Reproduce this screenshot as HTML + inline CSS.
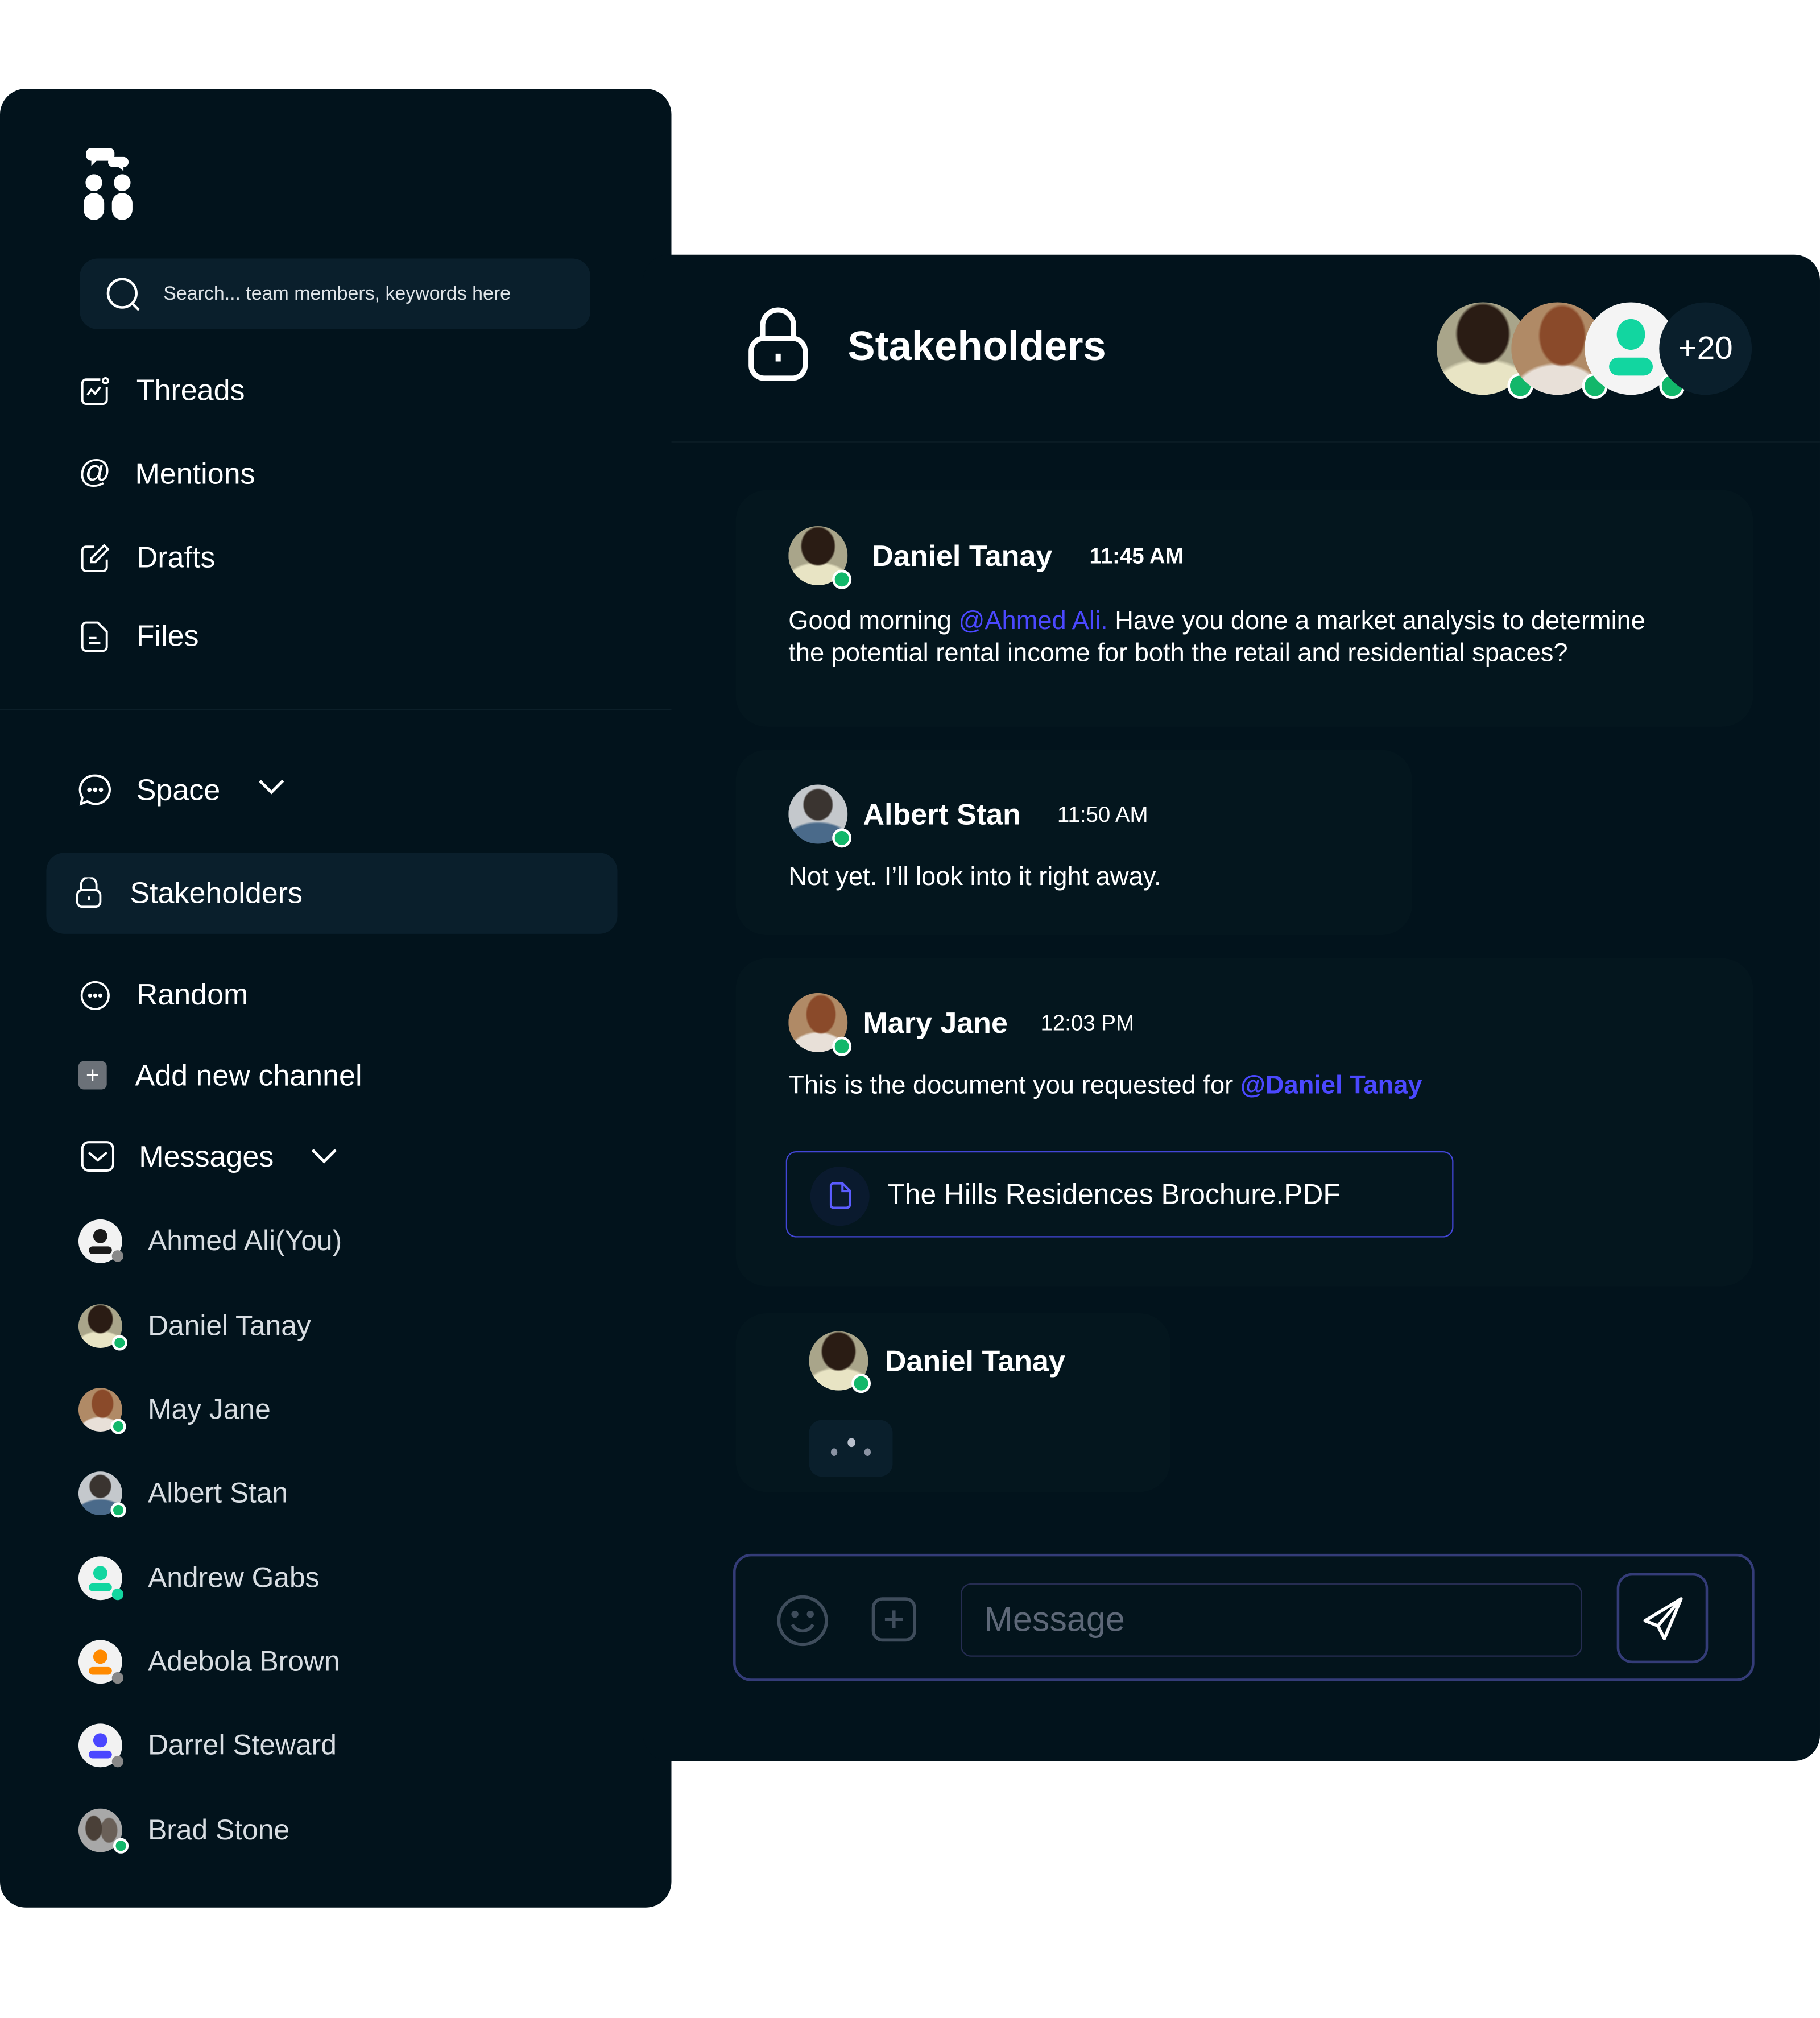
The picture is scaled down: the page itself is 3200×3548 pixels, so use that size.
<!DOCTYPE html>
<html><head><meta charset="utf-8">
<style>
html,body{margin:0;padding:0;background:#fff;}
body{width:3200px;height:3547px;overflow:hidden;position:relative;font-family:"Liberation Sans",sans-serif;}
#s{position:absolute;left:0;top:0;width:1415px;height:1569px;transform:scale(2.26148);transform-origin:0 0;}
.a{position:absolute;}
.side{left:0;top:69px;width:522px;height:1414px;background:#02131c;border-radius:20px;}
.main{left:500px;top:198px;width:915px;height:1171px;background:#02131c;border-radius:20px;}
.t{position:absolute;color:#fff;white-space:nowrap;line-height:1;}
.nav{font-size:23px;}
.ic{position:absolute;}
.card{position:absolute;background:#04161e;border-radius:24px;}
.av{position:absolute;border-radius:50%;overflow:hidden;}
.dot{position:absolute;border-radius:50%;background:#12b76a;border:2px solid #fff;}
.gdot{position:absolute;border-radius:50%;background:#888;}
.cn{font-size:22px;color:#d8dde2;}
.dt{background:radial-gradient(ellipse 30% 34% at 50% 34%,#2a1c14 0 90%,transparent 100%),radial-gradient(ellipse 60% 40% at 50% 100%,#e8e4c4 0 90%,transparent 100%),#a9a58a;}
.mj{background:radial-gradient(ellipse 26% 34% at 55% 36%,#8a4a2a 0 90%,transparent 100%),radial-gradient(ellipse 50% 35% at 50% 100%,#e8e0d8 0 90%,transparent 100%),#b08a66;}
.as{background:radial-gradient(ellipse 26% 28% at 50% 34%,#3a3430 0 90%,transparent 100%),radial-gradient(ellipse 60% 38% at 50% 100%,#4a6a8a 0 90%,transparent 100%),#c4c8cc;}
.bs{background:radial-gradient(ellipse 20% 30% at 35% 45%,#4a4038 0 90%,transparent 100%),radial-gradient(ellipse 20% 30% at 70% 50%,#6a6058 0 90%,transparent 100%),#a8a8a8;}
</style></head><body>
<div id="s">
<div class="a side"></div>
<div class="a main"></div>
<div class="a" style="left:522px;top:343px;width:893px;height:1px;background:#0a1c25"></div>
<div class="a" style="left:0;top:551px;width:522px;height:1px;background:#0c1f29"></div>

<svg class="ic" style="left:62px;top:113px" width="48" height="60" viewBox="0 0 48 60">
<rect x="5" y="2" width="22" height="10" rx="4" fill="#fff"/><path d="M9 11l0 5 5-5z" fill="#fff"/>
<rect x="22" y="9" width="16" height="8" rx="4" fill="#fff"/><path d="M29 16l5 4 0-4z" fill="#fff"/>
<circle cx="11" cy="29" r="6.5" fill="#fff"/><circle cx="33" cy="29" r="6.5" fill="#fff"/>
<rect x="3" y="37" width="16" height="21" rx="8" fill="#fff"/><rect x="25" y="37" width="16" height="21" rx="8" fill="#fff"/>
</svg>

<div class="a" style="left:62px;top:201px;width:397px;height:55px;background:#0a1f2c;border-radius:14px"></div>
<svg class="ic" style="left:82px;top:214px" width="30" height="30" viewBox="0 0 30 30" fill="none" stroke="#fff" stroke-width="2"><circle cx="13" cy="14" r="11"/><path d="M21 22l5 5"/></svg>
<div class="t" style="left:127px;top:221px;font-size:15px;color:#dfe4e8">Search... team members, keywords here</div>

<svg class="ic" style="left:62px;top:292px" width="24" height="24" viewBox="0 0 24 24" fill="none" stroke="#fff" stroke-width="1.7"><path d="M16 3H5a3 3 0 0 0-3 3v13a3 3 0 0 0 3 3h13a3 3 0 0 0 3-3V9"/><circle cx="20" cy="4" r="2"/><path d="M6 15l3-4 3 3 4-5"/></svg>
<div class="t nav" style="left:106px;top:292px">Threads</div>
<div class="t" style="left:61px;top:355px;font-size:25px">@</div>
<div class="t nav" style="left:105px;top:357px">Mentions</div>
<svg class="ic" style="left:62px;top:422px" width="24" height="24" viewBox="0 0 24 24" fill="none" stroke="#fff" stroke-width="1.7"><path d="M11 3H5a3 3 0 0 0-3 3v13a3 3 0 0 0 3 3h13a3 3 0 0 0 3-3v-6"/><path d="M19 2l3 3-10 10H9v-3z"/></svg>
<div class="t nav" style="left:106px;top:422px">Drafts</div>
<svg class="ic" style="left:63px;top:483px" width="22" height="24" viewBox="0 0 22 24" fill="none" stroke="#fff" stroke-width="1.7"><path d="M4 1h9l7 7v12a3 3 0 0 1-3 3H4a3 3 0 0 1-3-3V4a3 3 0 0 1 3-3z"/><path d="M6 13h6M6 17h9"/></svg>
<div class="t nav" style="left:106px;top:483px">Files</div>

<svg class="ic" style="left:61px;top:601px" width="26" height="26" viewBox="0 0 26 26" fill="none" stroke="#fff" stroke-width="1.8"><path d="M13 2a11 11 0 1 1-6 20l-5 2 1-5A11 11 0 0 1 13 2z"/><circle cx="8.5" cy="13" r=".8" fill="#fff"/><circle cx="13" cy="13" r=".8" fill="#fff"/><circle cx="17.5" cy="13" r=".8" fill="#fff"/></svg>
<div class="t nav" style="left:106px;top:603px">Space</div>
<svg class="ic" style="left:200px;top:605px" width="22" height="14" viewBox="0 0 22 14" fill="none" stroke="#fff" stroke-width="2.2"><path d="M2 2l9 9 9-9"/></svg>

<div class="a" style="left:36px;top:663px;width:444px;height:63px;background:#0a1f2c;border-radius:14px"></div>
<svg class="ic" style="left:59px;top:682px" width="20" height="24" viewBox="0 0 20 24" fill="none" stroke="#fff" stroke-width="1.7"><path d="M4 10V6a6 6 0 0 1 12 0v4"/><rect x="1" y="10" width="18" height="13" rx="4"/><path d="M10 15v3"/></svg>
<div class="t nav" style="left:101px;top:683px">Stakeholders</div>

<svg class="ic" style="left:62px;top:762px" width="24" height="24" viewBox="0 0 24 24" fill="none" stroke="#fff" stroke-width="1.6"><circle cx="12" cy="12" r="10.5"/><circle cx="8" cy="12" r=".8" fill="#fff"/><circle cx="12" cy="12" r=".8" fill="#fff"/><circle cx="16" cy="12" r=".8" fill="#fff"/></svg>
<div class="t nav" style="left:106px;top:762px">Random</div>
<div class="a" style="left:61px;top:825px;width:22px;height:22px;background:#6b7178;border-radius:4px;color:#fff;font-size:18px;line-height:22px;text-align:center">+</div>
<div class="t nav" style="left:105px;top:825px">Add new channel</div>
<svg class="ic" style="left:63px;top:887px" width="26" height="24" viewBox="0 0 26 24" fill="none" stroke="#fff" stroke-width="1.8"><rect x="1" y="1" width="24" height="22" rx="5"/><path d="M6 9l7 6 7-6"/></svg>
<div class="t nav" style="left:108px;top:888px">Messages</div>
<svg class="ic" style="left:241px;top:892px" width="22" height="14" viewBox="0 0 22 14" fill="none" stroke="#fff" stroke-width="2.2"><path d="M2 2l9 9 9-9"/></svg>

<div class="av" style="left:61px;top:948px;width:34px;height:34px;background:#f2f2f2"><svg width="34" height="34"><circle cx="17" cy="13" r="5.5" fill="#1a1a1a"/><rect x="8" y="21" width="18" height="6" rx="3" fill="#1a1a1a"/></svg></div><div class="gdot" style="left:87px;top:972px;width:9px;height:9px"></div>
<div class="t cn" style="left:115px;top:954px">Ahmed Ali(You)</div>
<div class="av dt" style="left:61px;top:1014px;width:34px;height:34px"></div><div class="dot" style="left:87px;top:1038px;width:8px;height:8px"></div>
<div class="t cn" style="left:115px;top:1020px">Daniel Tanay</div>
<div class="av mj" style="left:61px;top:1079px;width:34px;height:34px"></div><div class="dot" style="left:86px;top:1103px;width:8px;height:8px"></div>
<div class="t cn" style="left:115px;top:1085px">May Jane</div>
<div class="av as" style="left:61px;top:1144px;width:34px;height:34px"></div><div class="dot" style="left:86px;top:1168px;width:8px;height:8px"></div>
<div class="t cn" style="left:115px;top:1150px">Albert Stan</div>
<div class="av" style="left:61px;top:1210px;width:34px;height:34px;background:#f2f2f2"><svg width="34" height="34"><circle cx="17" cy="13" r="5.5" fill="#12d6a0"/><rect x="8" y="21" width="18" height="6" rx="3" fill="#12d6a0"/></svg></div><div class="a" style="left:87px;top:1235px;width:9px;height:9px;border-radius:50%;background:#12d6a0"></div>
<div class="t cn" style="left:115px;top:1216px">Andrew Gabs</div>
<div class="av" style="left:61px;top:1275px;width:34px;height:34px;background:#f2f2f2"><svg width="34" height="34"><circle cx="17" cy="13" r="5.5" fill="#ff8a00"/><rect x="8" y="21" width="18" height="6" rx="3" fill="#ff8a00"/></svg></div><div class="gdot" style="left:87px;top:1300px;width:9px;height:9px"></div>
<div class="t cn" style="left:115px;top:1281px">Adebola Brown</div>
<div class="av" style="left:61px;top:1340px;width:34px;height:34px;background:#f2f2f2"><svg width="34" height="34"><circle cx="17" cy="13" r="5.5" fill="#4a46ff"/><rect x="8" y="21" width="18" height="6" rx="3" fill="#4a46ff"/></svg></div><div class="gdot" style="left:87px;top:1365px;width:9px;height:9px"></div>
<div class="t cn" style="left:115px;top:1346px">Darrel Steward</div>
<div class="av bs" style="left:61px;top:1406px;width:34px;height:34px"></div><div class="dot" style="left:88px;top:1429px;width:8px;height:8px"></div>
<div class="t cn" style="left:115px;top:1412px">Brad Stone</div>

<svg class="ic" style="left:581px;top:239px" width="48" height="57" viewBox="0 0 48 57" fill="none" stroke="#fff" stroke-width="4"><path d="M12 24V14a12 12 0 0 1 24 0v10"/><rect x="3" y="24" width="42" height="31" rx="10"/><path d="M24 36v6"/></svg>
<div class="t" style="left:659px;top:253px;font-size:32px;font-weight:bold">Stakeholders</div>
<div class="av dt" style="left:1117px;top:235px;width:72px;height:72px"></div>
<div class="dot" style="left:1172px;top:290px;width:16px;height:16px"></div>
<div class="av mj" style="left:1175px;top:235px;width:72px;height:72px"></div>
<div class="dot" style="left:1230px;top:290px;width:16px;height:16px"></div>
<div class="av" style="left:1232px;top:235px;width:72px;height:72px;background:#f4f4f4"><svg width="72" height="72"><ellipse cx="36" cy="25" rx="11" ry="12" fill="#12d6a0"/><rect x="19" y="43" width="34" height="14" rx="7" fill="#12d6a0"/></svg></div>
<div class="dot" style="left:1290px;top:290px;width:16px;height:16px"></div>
<div class="av" style="left:1290px;top:235px;width:72px;height:72px;background:#0a1f2c;color:#fff;font-size:25px;line-height:72px;text-align:center">+20</div>

<div class="card" style="left:572px;top:381px;width:791px;height:184px"></div>
<div class="av dt" style="left:613px;top:409px;width:46px;height:46px"></div>
<div class="dot" style="left:647px;top:443px;width:11px;height:11px"></div>
<div class="t" style="left:678px;top:421px;font-size:23px;font-weight:bold">Daniel Tanay</div>
<div class="t" style="left:847px;top:424px;font-size:17px;font-weight:bold">11:45 AM</div>
<div class="t" style="left:613px;top:471px;font-size:20px;line-height:25px;white-space:normal;width:680px">Good morning <span style="color:#4b48ff">@Ahmed Ali.</span> Have you done a market analysis to determine the potential rental income for both the retail and residential spaces?</div>

<div class="card" style="left:572px;top:583px;width:526px;height:144px"></div>
<div class="av as" style="left:613px;top:610px;width:46px;height:46px"></div>
<div class="dot" style="left:647px;top:644px;width:11px;height:11px"></div>
<div class="t" style="left:671px;top:622px;font-size:23px;font-weight:bold">Albert Stan</div>
<div class="t" style="left:822px;top:625px;font-size:17px">11:50 AM</div>
<div class="t" style="left:613px;top:672px;font-size:20px">Not yet. I’ll look into it right away.</div>

<div class="card" style="left:572px;top:745px;width:791px;height:255px"></div>
<div class="av mj" style="left:613px;top:772px;width:46px;height:46px"></div>
<div class="dot" style="left:647px;top:806px;width:11px;height:11px"></div>
<div class="t" style="left:671px;top:784px;font-size:23px;font-weight:bold">Mary Jane</div>
<div class="t" style="left:809px;top:787px;font-size:17px">12:03 PM</div>
<div class="t" style="left:613px;top:834px;font-size:20px">This is the document you requested for <b style="color:#4b48ff">@Daniel Tanay</b></div>
<div class="a" style="left:611px;top:895px;width:519px;height:67px;border:1.5px solid #4346d8;border-radius:8px;box-sizing:border-box"></div>
<div class="a" style="left:630px;top:907px;width:46px;height:46px;border-radius:50%;background:#0a1a2e"></div>
<svg class="ic" style="left:645px;top:919px" width="17" height="21" viewBox="0 0 17 21" fill="none" stroke="#5a5cff" stroke-width="1.8"><path d="M3 1h7l6 6v10a3 3 0 0 1-3 3H3a2 2 0 0 1-2-2V3a2 2 0 0 1 2-2z"/><path d="M10 1v6h6"/></svg>
<div class="t" style="left:690px;top:918px;font-size:22px">The Hills Residences Brochure.PDF</div>

<div class="card" style="left:572px;top:1021px;width:338px;height:139px"></div>
<div class="av dt" style="left:629px;top:1035px;width:46px;height:46px"></div>
<div class="dot" style="left:662px;top:1068px;width:11px;height:11px"></div>
<div class="t" style="left:688px;top:1047px;font-size:23px;font-weight:bold">Daniel Tanay</div>
<div class="a" style="left:629px;top:1104px;width:65px;height:44px;background:#0a1f2c;border-radius:10px"></div>
<div class="a" style="left:646px;top:1126px;width:5px;height:6px;border-radius:50%;background:#8a93a3"></div>
<div class="a" style="left:659px;top:1118px;width:6px;height:7px;border-radius:50%;background:#b8bfcc"></div>
<div class="a" style="left:672px;top:1126px;width:5px;height:6px;border-radius:50%;background:#8a93a3"></div>

<div class="a" style="left:570px;top:1208px;width:794px;height:99px;border:2px solid #343c78;border-radius:14px;box-sizing:border-box;background:#03141c"></div>
<svg class="ic" style="left:603px;top:1239px" width="42" height="42" viewBox="0 0 42 42" fill="none" stroke="#3f4d5c" stroke-width="2.5"><circle cx="21" cy="21" r="18.5"/><path d="M13 24a9 9 0 0 0 16 0"/><circle cx="15" cy="16" r="1.5" fill="#3f4d5c"/><circle cx="27" cy="16" r="1.5" fill="#3f4d5c"/></svg>
<svg class="ic" style="left:677px;top:1241px" width="36" height="36" viewBox="0 0 36 36" fill="none" stroke="#3f4d5c" stroke-width="2.5"><rect x="2" y="2" width="32" height="32" rx="7"/><path d="M18 11v14M11 18h14"/></svg>
<div class="a" style="left:747px;top:1231px;width:483px;height:57px;border:1px solid #262d52;border-radius:8px;box-sizing:border-box"></div>
<div class="t" style="left:765px;top:1246px;font-size:27px;color:#5e6878">Message</div>
<div class="a" style="left:1257px;top:1223px;width:71px;height:70px;border:2px solid #343c78;border-radius:12px;box-sizing:border-box"></div>
<svg class="ic" style="left:1276px;top:1240px" width="34" height="36" viewBox="0 0 34 36" fill="none" stroke="#fff" stroke-width="2.5" stroke-linejoin="round"><path d="M31 3L3 20l10 4 5 10z"/><path d="M13 24L31 3"/></svg>
</div>
</body></html>
